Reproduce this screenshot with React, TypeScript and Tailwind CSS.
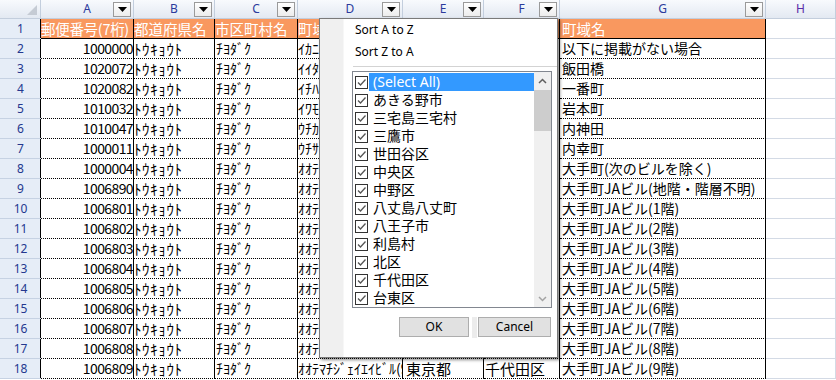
import React from "react";

type Row = { zip: string; kana: string; town: string };

const base: Row[] = [
  { zip: "1000000", kana: "ｲｶﾆｹｲｻｲｶﾞﾅｲﾊﾞｱｲ", town: "以下に掲載がない場合" },
  { zip: "1020072", kana: "ｲｲﾀﾞﾊﾞｼ", town: "飯田橋" },
  { zip: "1020082", kana: "ｲﾁﾊﾞﾝﾁｮｳ", town: "一番町" },
  { zip: "1010032", kana: "ｲﾜﾓﾄﾁｮｳ", town: "岩本町" },
  { zip: "1010047", kana: "ｳﾁｶﾝﾀﾞ", town: "内神田" },
  { zip: "1000011", kana: "ｳﾁｻｲﾜｲﾁｮｳ", town: "内幸町" },
  { zip: "1000004", kana: "ｵｵﾃﾏﾁ(ﾂｷﾞﾉﾋﾞﾙｦﾉｿﾞｸ)", town: "大手町(次のビルを除く)" },
  { zip: "1006890", kana: "ｵｵﾃﾏﾁｼﾞｪｲｴｲﾋﾞﾙ(ﾁｶｲ･ｶｲｿｳﾌﾒｲ)", town: "大手町JAビル(地階・階層不明)" },
];
const floors: Row[] = [1, 2, 3, 4, 5, 6, 7, 8, 9].map((n) => ({
  zip: "100680" + n,
  kana: "ｵｵﾃﾏﾁｼﾞｪｲｴｲﾋﾞﾙ(" + n + "ｶｲ)",
  town: "大手町JAビル(" + n + "階)",
}));
const rows = [...base, ...floors];

const listItems = [
  "(Select All)",
  "あきる野市",
  "三宅島三宅村",
  "三鷹市",
  "世田谷区",
  "中央区",
  "中野区",
  "八丈島八丈町",
  "八王子市",
  "利島村",
  "北区",
  "千代田区",
  "台東区",
];

function DropBtn() {
  return (
    <div className="absolute right-[2px] top-[2px] w-[18px] h-[15px] border border-[#9a9a9a] bg-linear-to-b from-white to-[#ececec] flex items-center justify-center">
      <svg width="9" height="5" viewBox="0 0 9 5">
        <polygon points="0,0 9,0 4.5,5" fill="#000" />
      </svg>
    </div>
  );
}

const headCls =
  "relative flex items-center justify-center bg-linear-to-b from-[#f8fafd] to-[#e3e9f2] border-r border-b border-[#c3cedd] text-[12px] leading-none text-[#2b3a9c] font-['Noto_Sans',sans-serif]";

const rowHeadCls =
  "flex items-center justify-center bg-[#e6edf7] border-b border-[#c6d2e3] shadow-[inset_-1px_0_0_#000] text-[12px] leading-none text-[#24388f] font-['Noto_Sans',sans-serif]";

const cellCls =
  "flex items-center pr-px bg-white border-b border-dotted border-black shadow-[inset_-1px_0_0_#000] text-[14px] leading-[19px] text-black whitespace-nowrap";

const orangeCls =
  "flex items-center pr-px bg-[#f9985f] border-b border-black shadow-[inset_-1px_0_0_#000] text-[14.5px] leading-[19px] text-white whitespace-nowrap";

const hCls = "bg-white border-r border-b border-[#d3dae5]";

function Cell({ text, right, cls, extra }: { text: string; right?: boolean; cls: string; extra?: string }) {
  return (
    <div className={cls}>
      <div className={"min-w-0 flex-1 overflow-hidden " + (right ? "text-right " : "") + (extra || "")}>{text}</div>
    </div>
  );
}

function Check() {
  return (
    <div className="w-[13px] h-[13px] border border-[#333] bg-white flex items-center justify-center shrink-0">
      <svg width="11" height="11" viewBox="0 0 11 11">
        <path d="M2 5.5 L4.5 8 L9.5 2.5" stroke="#555" strokeWidth="1.3" fill="none" />
      </svg>
    </div>
  );
}

export default function App() {
  return (
    <div className="relative w-[836px] h-[380px] overflow-hidden bg-white font-['Noto_Sans_CJK_JP',sans-serif]">
      <div className="grid grid-cols-[41px_93px_81px_83px_105px_81px_76px_206px_1fr] grid-rows-[19px_repeat(18,20px)]">
        {/* header row */}
        <div className="relative bg-linear-to-b from-[#f8fafd] to-[#e3e9f2] border-r border-b border-[#c3cedd] flex items-end justify-end pr-[3px] pb-[3px]">
          <svg width="10" height="10" viewBox="0 0 10 10">
            <polygon points="10,0 10,10 0,10" fill="#c5cbd4" />
          </svg>
        </div>
        {["A", "B", "C", "D", "E", "F", "G"].map((c) => (
          <div key={c} className={headCls}>
            {c}
            <DropBtn />
          </div>
        ))}
        <div className={headCls + " text-[#5a2ba8]"}>H</div>

        {/* row 1 */}
        <div className={rowHeadCls}>1</div>
        <Cell cls={orangeCls} text="郵便番号(7桁)" extra="tracking-[-0.3px]" />
        <Cell cls={orangeCls} text="都道府県名" />
        <Cell cls={orangeCls} text="市区町村名" />
        <Cell cls={orangeCls} text="町域名" />
        <Cell cls={orangeCls} text="都道府県名" />
        <Cell cls={orangeCls} text="市区町村名" />
        <Cell cls={orangeCls} text="町域名" extra="pl-[2px]" />
        <div className={hCls} />

        {rows.map((r, i) => (
          <React.Fragment key={r.zip}>
            <div className={rowHeadCls}>{i + 2}</div>
            <Cell cls={cellCls} text={r.zip} right extra="tracking-[-0.6px]" />
            <Cell cls={cellCls} text="ﾄｳｷｮｳﾄ" extra="text-[15px] tracking-[0.6px]" />
            <Cell cls={cellCls} text="ﾁﾖﾀﾞｸ" extra="pl-[1px]" />
            <Cell cls={cellCls} text={r.kana} />
            <Cell cls={cellCls} text="東京都" extra="pl-[3px] text-[15px]" />
            <Cell cls={cellCls} text="千代田区" extra="pl-[1px] text-[15px]" />
            <Cell cls={cellCls} text={r.town} extra="pl-[2px]" />
            <div className={hCls} />
          </React.Fragment>
        ))}
      </div>

      {/* filter popup */}
      <div className="absolute left-[319px] top-[18px] w-[239px] h-[340px] border border-[#7a7a7a] bg-white shadow-[2px_2px_3px_rgba(0,0,0,0.45)] flex font-['Noto_Sans',sans-serif]">
        <div className="w-[24px] shrink-0 bg-[#f0f0f0] border-r border-[#f7f7f7]" />
        <div className="flex-1 flex flex-col">
          <div className="h-[22px] flex items-center pl-[11px] text-[12px] leading-none text-black">Sort A to Z</div>
          <div className="h-[22px] flex items-center pl-[11px] text-[12px] leading-none text-black">Sort Z to A</div>
          <div className="mt-[3px] ml-[9px] h-px bg-[#d3d3d3]" />
          <div className="mt-[4px] ml-[8px] w-[200px] h-[237px] border border-[#828790] bg-white flex overflow-hidden">
            <div className="flex-1 pt-px overflow-hidden">
              {listItems.map((it, i) => (
                <div key={it} className="h-[18px] flex items-center pl-[2px]">
                  <Check />
                  <div
                    className={
                      "ml-[1px] h-[18px] flex-1 flex items-center pl-[4px] text-[14px] leading-[18px] font-['Noto_Sans','Noto_Sans_CJK_JP',sans-serif] " +
                      (i === 0 ? "bg-[#3399ff] text-white" : "text-black")
                    }
                  >
                    {it}
                  </div>
                </div>
              ))}
            </div>
            <div className="w-[17px] shrink-0 bg-[#f0f0f0] flex flex-col">
              <div className="h-[17px] flex items-center justify-center">
                <svg width="9" height="6" viewBox="0 0 9 6">
                  <path d="M1 5 L4.5 1.5 L8 5" stroke="#606060" strokeWidth="1.5" fill="none" />
                </svg>
              </div>
              <div className="mt-px h-[41px] bg-[#cdcdcd]" />
              <div className="flex-1" />
              <div className="h-[17px] flex items-center justify-center">
                <svg width="9" height="6" viewBox="0 0 9 6">
                  <path d="M1 1 L4.5 4.5 L8 1" stroke="#a3a3a3" strokeWidth="1.5" fill="none" />
                </svg>
              </div>
            </div>
          </div>
          <div className="mt-[9px] ml-[55px] flex items-start">
            <div className="w-[70px] h-[20px] border border-[#adadad] bg-[#e1e1e1] flex items-center justify-center text-[12px] leading-none text-black">
              OK
            </div>
            <div className="ml-[3px] w-[5px] h-[21px] bg-[#ececec]" />
            <div className="ml-px w-[73px] h-[20px] border border-[#adadad] bg-[#e1e1e1] flex items-center justify-center text-[12px] leading-none text-black">
              Cancel
            </div>
          </div>
        </div>
      </div>
    </div>
  );
}
